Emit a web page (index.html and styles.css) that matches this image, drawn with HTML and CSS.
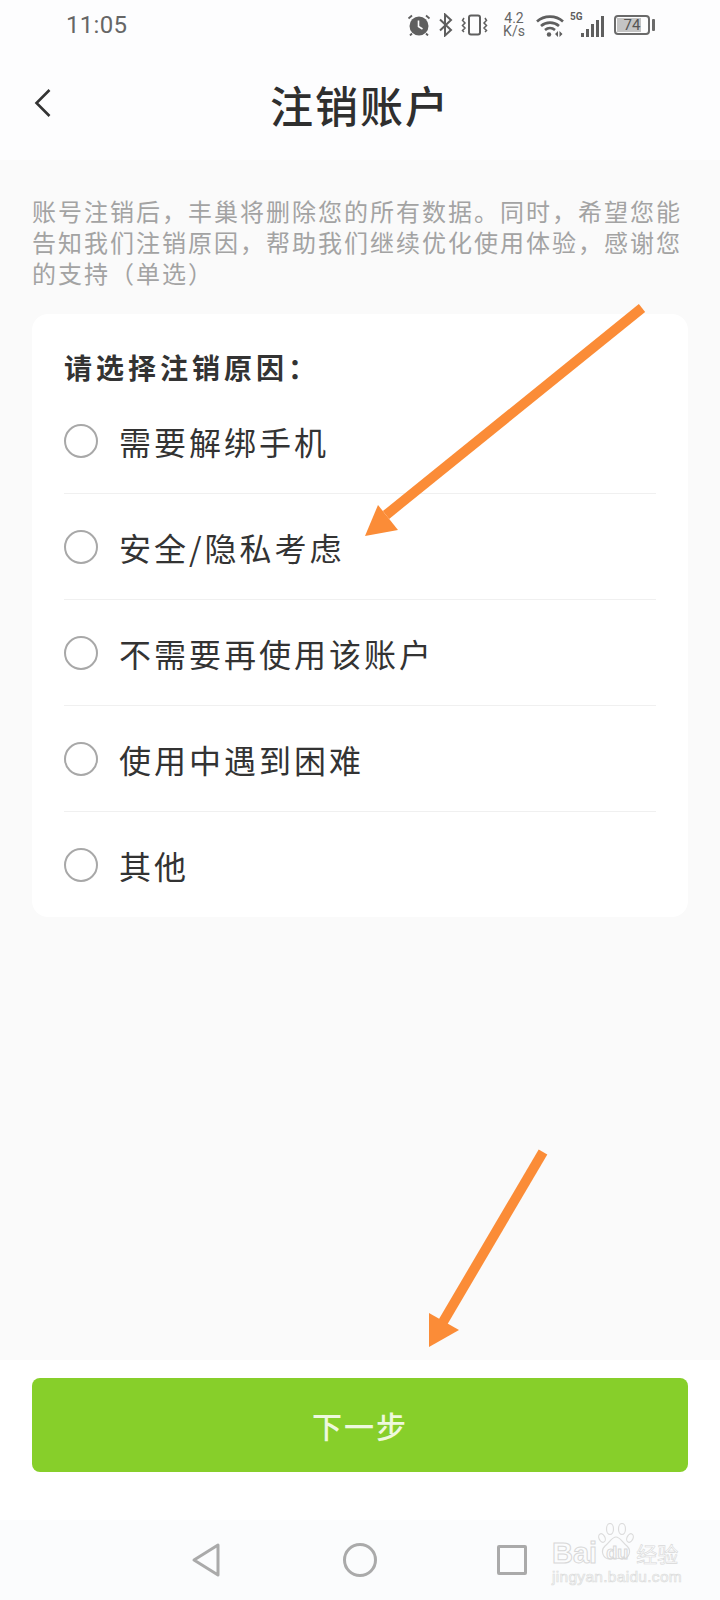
FILE: index.html
```html
<!DOCTYPE html>
<html lang="zh-CN">
<head>
    <meta charset="UTF-8">
    <meta name="viewport" content="width=device-width, initial-scale=1.0">
    <title>注销账户</title>
    <link rel="stylesheet" href="styles.css">
</head>
<body>
    <div class="status-bar">
        <span class="time">11:05</span>
        <div class="status-icons">
            <!-- alarm -->
            <svg class="icon-alarm" width="24" height="22" viewBox="0 0 23 22">
                <circle cx="11.5" cy="12" r="9.5" fill="#5f5f5f"/>
                <path d="M11 6.5v6l4 2.5" fill="none" stroke="#fdfdfe" stroke-width="1.6"/>
                <path d="M1 4.5 4.5 1.5M22 4.5 18.5 1.5M4.5 19.5l-2 2M18.5 19.5l2 2" stroke="#5f5f5f" stroke-width="1.8"/>
            </svg>
            <!-- bluetooth -->
            <svg class="icon-bt" width="16" height="24" viewBox="0 0 16 24">
                <path d="M2 6.5 13 17l-6 5.5v-21L13 7 2 17.500" fill="none" stroke="#5f5f5f" stroke-width="2"/>
            </svg>
            <!-- vibrate -->
            <svg class="icon-vib" width="27" height="22" viewBox="0 0 27 22">
                <rect x="8" y="1.500" width="11" height="19" rx="2" fill="none" stroke="#5f5f5f" stroke-width="2"/>
                <path d="M3 4 1.500 6.500 4 9 1.500 11.500 4 14 1.500 16.500 3 18M24 4l1.500 2.500L23 9l2.500 2.500L23 14l2.500 2.500L24 18" fill="none" stroke="#5f5f5f" stroke-width="1.500"/>
            </svg>
            <div class="speed"><span>4.2</span><span>K/s</span></div>
            <!-- wifi -->
            <svg class="icon-wifi" width="28" height="24" viewBox="0 0 28 24">
                <path d="M1 8.500C8 2 20 2 27 8.500M5 13c5-4.500 13-4.500 18 0M9 17c3-2.500 7-2.500 10 0" fill="none" stroke="#5f5f5f" stroke-width="2.600"/>
                <circle cx="13" cy="21.500" r="2.200" fill="#5f5f5f"/>
                <path d="M19 21l3-3v6zM23.500 18l3 3-3 3z" fill="#5f5f5f"/>
            </svg>
            <div class="signal">
                <span class="signal-label">5G</span>
                <div class="signal-bars">
                    <i class="bar-1"></i><i class="bar-2"></i><i class="bar-3"></i><i class="bar-4"></i><i class="bar-5"></i>
                </div>
            </div>
            <div class="battery">
                <div class="battery-body"><span class="battery-fill"></span><span class="battery-num">74</span></div>
                <span class="battery-cap"></span>
            </div>
        </div>
    </div>

    <header class="top-bar">
        <svg class="back" width="20" height="30" viewBox="0 0 20 30">
            <path d="M16.500 2 3.500 15l13 13" fill="none" stroke="#333" stroke-width="2.600"/>
        </svg>
        <h1>注销账户</h1>
    </header>

    <main class="content">
        <p class="intro">账号注销后，丰巢将删除您的所有数据。同时，希望您能告知我们注销原因，帮助我们继续优化使用体验，感谢您的支持（单选）</p>
        <section class="card">
            <h2>请选择注销原因：</h2>
            <div class="option"><span class="radio"></span><span>需要解绑手机</span></div>
            <div class="option"><span class="radio"></span><span>安全/隐私考虑</span></div>
            <div class="option"><span class="radio"></span><span>不需要再使用该账户</span></div>
            <div class="option"><span class="radio"></span><span>使用中遇到困难</span></div>
            <div class="option"><span class="radio"></span><span>其他</span></div>
        </section>
    </main>

    <div class="footer">
        <button type="button">下一步</button>
    </div>

    <nav class="nav-bar">
        <svg class="nav-back" width="30" height="36" viewBox="0 0 30 36">
            <path d="M27 3v30L3 18z" fill="none" stroke="#aaa" stroke-width="3" stroke-linejoin="round"/>
        </svg>
        <span class="nav-circle"></span>
        <span class="nav-square"></span>
    </nav>

    <!-- watermark -->
    <div class="watermark">
        <svg class="paw" width="38" height="38" viewBox="0 0 38 38">
            <g fill="none" stroke="#dcdcdc" stroke-width="1.200">
                <ellipse cx="5" cy="15" rx="3" ry="4.500" transform="rotate(-25 5 15)"/>
                <ellipse cx="13" cy="6" rx="3.500" ry="5.500"/>
                <ellipse cx="25" cy="6" rx="3.500" ry="5.500"/>
                <ellipse cx="33" cy="15" rx="3" ry="4.500" transform="rotate(25 33 15)"/>
                <path d="M19 14c-4 0-6 5-11 9-5 5-2 13 5 13 4-1 8-1 12 0 7 0 10-8 5-13-5-4-7-9-11-9z"/>
            </g>
        </svg>
        <div class="wm-row"><span class="wm-bai">Bai</span><span class="wm-du">du</span><span class="wm-cn">经验</span></div>
        <div class="wm-url">jingyan.baidu.com</div>
    </div>

    <!-- annotation arrows drawn on top of the screenshot -->
    <svg class="arrows" width="720" height="1600" viewBox="0 0 720 1600">
        <path d="M642 308 386 515" stroke="#fb8c37" stroke-width="10" fill="none"/>
        <path d="M365 536 378 505 398 530z" fill="#fb8c37"/>
        <path d="M543 1152 443 1322" stroke="#fb8c37" stroke-width="10" fill="none"/>
        <path d="M429 1347V1313L459 1330z" fill="#fb8c37"/>
    </svg>
</body>
</html>
```

FILE: styles.css
```css
/* General */
* {
    box-sizing: border-box;
}

html, body {
    margin: 0;
    padding: 0;
}

body {
    position: relative;
    display: flex;
    flex-direction: column;
    height: 1600px;
    background-color: #fafafa;
    color: #333;
    font-family: "Noto Sans CJK SC", Roboto, sans-serif;
    overflow: hidden;
}

/* Status bar */
.status-bar {
    display: flex;
    justify-content: space-between;
    align-items: center;
    height: 50px;
    padding: 0 65px 0 66px;
    background-color: #fdfdfe;
    color: #666;
}

.time {
    font-family: Roboto, sans-serif;
    font-size: 24px;
    letter-spacing: 0.3px;
}

.status-icons {
    display: flex;
    align-items: center;
}

.icon-alarm {
    margin-right: 7px;
}

.icon-bt {
    margin-right: 7px;
}

.icon-vib {
    margin-right: 14px;
}

.speed {
    display: flex;
    flex-direction: column;
    align-items: center;
    width: 24px;
    margin-right: 10px;
    font-family: Roboto, sans-serif;
    font-size: 14px;
    line-height: 13px;
    color: #666;
}

.icon-wifi {
    margin-right: 6px;
}

.signal {
    display: flex;
    align-items: flex-end;
    position: relative;
    width: 35px;
    height: 24px;
    margin-right: 9px;
}

.signal-label {
    position: absolute;
    left: 0;
    top: -2px;
    font-family: Roboto, sans-serif;
    font-size: 10px;
    font-weight: 700;
    color: #5f5f5f;
}

.signal-bars {
    display: flex;
    align-items: flex-end;
    gap: 2px;
    margin-left: 11px;
}

.signal-bars i {
    display: block;
    width: 3px;
    background-color: #5f5f5f;
}

.bar-1 { height: 4px; }
.bar-2 { height: 8px; }
.bar-3 { height: 13px; }
.bar-4 { height: 17px; }
.bar-5 { height: 21px; }

.battery {
    display: flex;
    align-items: center;
    gap: 2px;
}

.battery-body {
    position: relative;
    width: 36px;
    height: 20px;
    border: 2px solid #6a6a6a;
    border-radius: 4px;
    text-align: center;
    font-family: Roboto, sans-serif;
    font-size: 15px;
    line-height: 16px;
}

.battery-fill {
    position: absolute;
    left: 1px;
    top: 1px;
    bottom: 1px;
    width: 74%;
    background-color: #c4c4c4;
}

.battery-num {
    position: relative;
    color: #555;
}

.battery-cap {
    width: 3px;
    height: 12px;
    border-radius: 1px;
    background-color: #6a6a6a;
}

/* Title bar */
.top-bar {
    display: flex;
    justify-content: center;
    align-items: center;
    position: relative;
    height: 110px;
    padding-bottom: 2px;
    background-color: #fdfdfe;
}

.top-bar h1 {
    margin: 0;
    font-size: 43px;
    font-weight: 500;
    letter-spacing: 2px;
    line-height: 60px;
    color: #2f2f2f;
}

.back {
    position: absolute;
    left: 33px;
    top: 38px;
}

/* Content */
.content {
    flex: 1;
    padding: 0 32px;
}

.intro {
    margin: 35px 0 26px;
    font-size: 24px;
    letter-spacing: 2px;
    line-height: 31px;
    color: #a3a3a3;
}

.card {
    height: 603px;
    padding: 35px 32px 0;
    background-color: #fff;
    border-radius: 16px;
}

.card h2 {
    margin: 0 0 3px;
    font-size: 28px;
    font-weight: 700;
    letter-spacing: 4px;
    line-height: 36px;
    color: #333;
}

.option {
    display: flex;
    align-items: center;
    height: 106px;
    font-size: 32px;
    letter-spacing: 3px;
    color: #333;
    border-bottom: 1px solid #f0f0f0;
}

.option:last-child {
    border-bottom: none;
}

.radio {
    flex: none;
    width: 34px;
    height: 34px;
    margin-right: 21px;
    border: 2px solid #a8a8a8;
    border-radius: 50%;
}

/* Footer */
.footer {
    height: 160px;
    padding: 18px 32px 0;
    background-color: #fff;
}

.footer button {
    display: block;
    width: 100%;
    height: 94px;
    border: none;
    border-radius: 8px;
    background-color: #87cf2a;
    color: #eef8dd;
    font-family: inherit;
    font-size: 30px;
    font-weight: 500;
    letter-spacing: 2px;
}

/* Navigation bar */
.nav-bar {
    display: grid;
    grid-template-columns: 30px 34px 30px;
    justify-content: center;
    align-items: center;
    gap: 120px;
    height: 80px;
    background-color: #fbfcfd;
}

.nav-back {
    margin-left: -2px;
}

.nav-circle {
    width: 34px;
    height: 34px;
    border: 3px solid #aaa;
    border-radius: 50%;
}

.nav-square {
    width: 30px;
    height: 30px;
    border: 3px solid #aaa;
    border-radius: 2px;
}

/* Watermark */
.watermark {
    position: absolute;
    left: 552px;
    top: 1520px;
    width: 130px;
    height: 72px;
}

.paw {
    position: absolute;
    left: 45px;
    top: 3px;
}

.wm-row {
    display: flex;
    align-items: center;
    position: absolute;
    left: 0;
    top: 20px;
    width: 130px;
    height: 26px;
    color: transparent;
    -webkit-text-stroke: 1px #d8d8d8;
    font-family: "Liberation Sans", sans-serif;
}

.wm-bai {
    font-size: 29px;
    font-weight: 700;
}

.wm-du {
    margin-left: 9px;
    font-size: 18px;
    font-weight: 700;
}

.wm-cn {
    margin-left: 8px;
    font-family: "Noto Sans CJK SC", sans-serif;
    font-size: 21px;
    -webkit-text-stroke: 0.6px #d8d8d8;
}

.wm-url {
    position: absolute;
    left: 0;
    top: 48px;
    font-family: "Liberation Sans", sans-serif;
    font-size: 15.500px;
    letter-spacing: 0.3px;
    color: transparent;
    -webkit-text-stroke: 0.7px #dcdcdc;
    white-space: nowrap;
}

/* Annotation arrows */
.arrows {
    position: absolute;
    left: 0;
    top: 0;
    pointer-events: none;
}
```
